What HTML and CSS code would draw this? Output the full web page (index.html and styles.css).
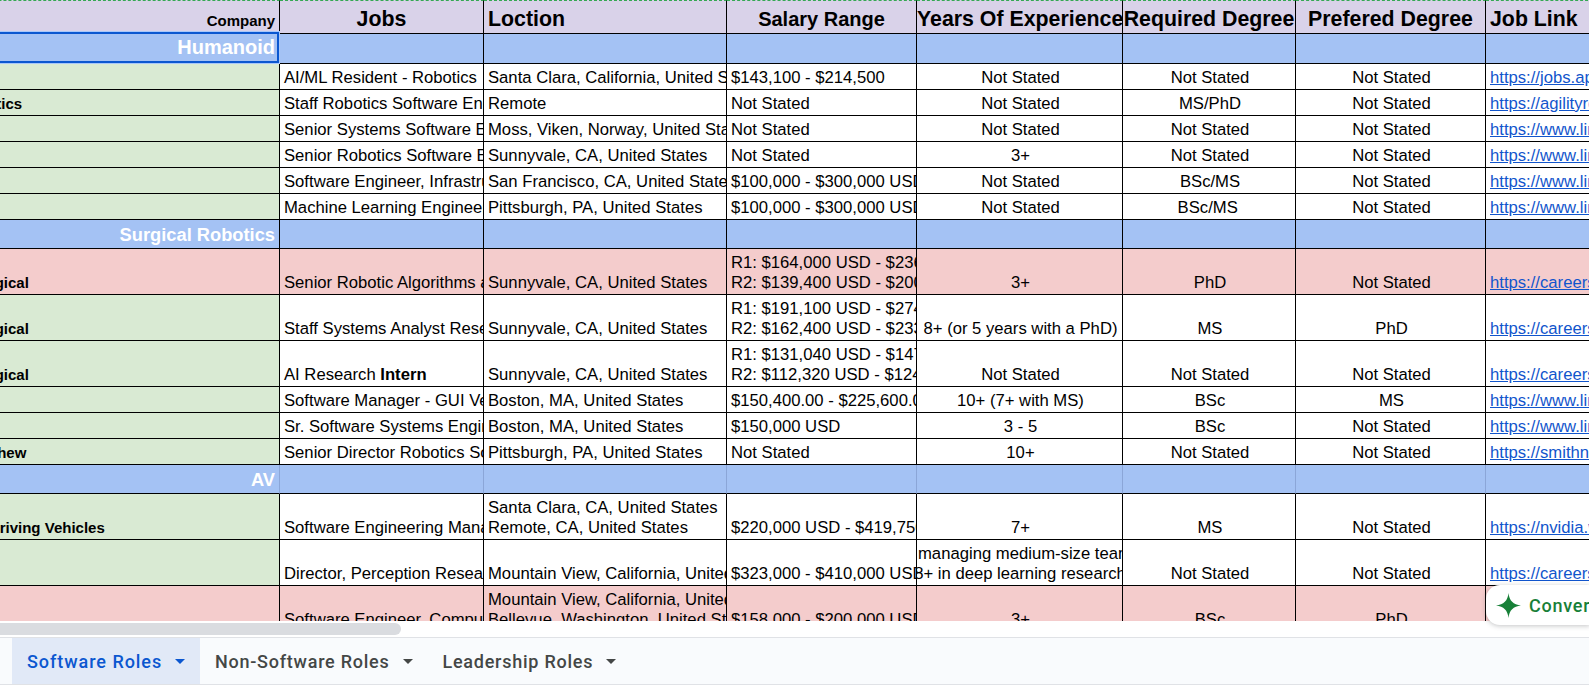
FILE: index.html
```html
<!DOCTYPE html>
<html lang="en">
<head>
<meta charset="utf-8">
<title>Job Tracker</title>
<link rel="stylesheet" href="styles.css">
</head>
<body>
<div class="app">
  <main class="viewport">
    <div class="grid-clip">
      <table class="sheet">
        <colgroup>
          <col class="c-company"><col class="c-jobs"><col class="c-loc"><col class="c-sal"><col class="c-exp"><col class="c-req"><col class="c-pref"><col class="c-link">
        </colgroup>
        <thead>
          <tr class="h-head">
            <th class="company-head">Company</th>
            <th class="big ctr">Jobs</th>
            <th class="big">Loction</th>
            <th class="mid ctr">Salary Range</th>
            <th class="big ctr tight">Years Of Experience</th>
            <th class="big ctr tight">Required Degree</th>
            <th class="big ctr">Prefered Degree</th>
            <th class="big">Job Link</th>
          </tr>
        </thead>
        <tbody>
          <tr class="section h-sec1"><td class="sec-name selected">Humanoid</td><td></td><td></td><td></td><td></td><td></td><td></td><td></td></tr>
          <tr class="ok h-1"><td class="co"></td><td>AI/ML Resident - Robotics</td><td>Santa Clara, California, United States</td><td>$143,100 - $214,500</td><td class="ctr">Not Stated</td><td class="ctr">Not Stated</td><td class="ctr">Not Stated</td><td><a href="#">https://jobs.apple.com/en-us/details</a></td></tr>
          <tr class="ok h-1"><td class="co">Agility Robotics</td><td>Staff Robotics Software Engineer</td><td>Remote</td><td>Not Stated</td><td class="ctr">Not Stated</td><td class="ctr">MS/PhD</td><td class="ctr">Not Stated</td><td><a href="#">https://agilityrobotics.com/careers</a></td></tr>
          <tr class="ok h-1"><td class="co"></td><td>Senior Systems Software Engineer</td><td>Moss, Viken, Norway, United States</td><td>Not Stated</td><td class="ctr">Not Stated</td><td class="ctr">Not Stated</td><td class="ctr">Not Stated</td><td><a href="#">https://www.linkedin.com/jobs/view</a></td></tr>
          <tr class="ok h-1"><td class="co"></td><td>Senior Robotics Software Engineer</td><td>Sunnyvale, CA, United States</td><td>Not Stated</td><td class="ctr">3+</td><td class="ctr">Not Stated</td><td class="ctr">Not Stated</td><td><a href="#">https://www.linkedin.com/jobs/view</a></td></tr>
          <tr class="ok h-1"><td class="co"></td><td>Software Engineer, Infrastructure</td><td>San Francisco, CA, United States</td><td>$100,000 - $300,000 USD</td><td class="ctr">Not Stated</td><td class="ctr">BSc/MS</td><td class="ctr">Not Stated</td><td><a href="#">https://www.linkedin.com/jobs/view</a></td></tr>
          <tr class="ok h-1"><td class="co"></td><td>Machine Learning Engineer</td><td>Pittsburgh, PA, United States</td><td>$100,000 - $300,000 USD</td><td class="ctr">Not Stated</td><td class="ctr">BSc/MS&nbsp;</td><td class="ctr">Not Stated</td><td><a href="#">https://www.linkedin.com/jobs/view</a></td></tr>
          <tr class="section h-sec2"><td class="sec-name">Surgical Robotics</td><td></td><td></td><td></td><td></td><td></td><td></td><td></td></tr>
          <tr class="bad h-2"><td class="co">Intuitive Surgical</td><td>Senior Robotic Algorithms and Controls</td><td>Sunnyvale, CA, United States</td><td>R1: $164,000 USD - $236,000 USD<br>R2: $139,400 USD - $200,600 USD</td><td class="ctr">3+</td><td class="ctr">PhD</td><td class="ctr">Not Stated</td><td><a href="#">https://careers.intuitive.com/en/jobs</a></td></tr>
          <tr class="ok h-2"><td class="co">Intuitive Surgical</td><td>Staff Systems Analyst Research</td><td>Sunnyvale, CA, United States</td><td>R1: $191,100 USD - $274,000 USD<br>R2: $162,400 USD - $233,000 USD</td><td class="ctr">8+ (or 5 years with a PhD)</td><td class="ctr">MS</td><td class="ctr">PhD</td><td><a href="#">https://careers.intuitive.com/en/jobs</a></td></tr>
          <tr class="ok h-2"><td class="co">Intuitive Surgical</td><td>AI Research <b>Intern</b></td><td>Sunnyvale, CA, United States</td><td>R1: $131,040 USD - $147,000 USD<br>R2: $112,320 USD - $124,000 USD</td><td class="ctr">Not Stated</td><td class="ctr">Not Stated</td><td class="ctr">Not Stated</td><td><a href="#">https://careers.intuitive.com/en/jobs</a></td></tr>
          <tr class="ok h-1"><td class="co"></td><td>Software Manager - GUI Verification</td><td>Boston, MA, United States</td><td>$150,400.00 - $225,600.00</td><td class="ctr">10+ (7+ with MS)</td><td class="ctr">BSc</td><td class="ctr">MS</td><td><a href="#">https://www.linkedin.com/jobs/view</a></td></tr>
          <tr class="ok h-1"><td class="co"></td><td>Sr. Software Systems Engineer</td><td>Boston, MA, United States</td><td>$150,000 USD</td><td class="ctr">3 - 5</td><td class="ctr">BSc</td><td class="ctr">Not Stated</td><td><a href="#">https://www.linkedin.com/jobs/view</a></td></tr>
          <tr class="ok h-1"><td class="co">Smith &amp; Nephew</td><td>Senior Director Robotics Software</td><td>Pittsburgh, PA, United States</td><td>Not Stated</td><td class="ctr">10+</td><td class="ctr">Not Stated</td><td class="ctr">Not Stated</td><td><a href="#">https://smithnephew.wd5.myworkdayjobs</a></td></tr>
          <tr class="section faint h-sec2"><td class="sec-name">AV</td><td></td><td></td><td></td><td></td><td></td><td></td><td></td></tr>
          <tr class="ok h-2"><td class="co">Nvidia Self Driving Vehicles</td><td>Software Engineering Manager</td><td>Santa Clara, CA, United States<br>Remote, CA, United States</td><td>$220,000 USD - $419,750 USD</td><td class="ctr">7+</td><td class="ctr">MS</td><td class="ctr">Not Stated</td><td><a href="#">https://nvidia.wd5.myworkdayjobs.com</a></td></tr>
          <tr class="ok h-2"><td class="co"></td><td>Director, Perception Research</td><td>Mountain View, California, United States</td><td>$323,000 - $410,000 USD</td><td class="exp-wrap"><div class="line-start">managing medium-size teams</div><div class="line-mid"><span>8+ in deep learning research</span></div></td><td class="ctr">Not Stated</td><td class="ctr">Not Stated</td><td><a href="#">https://careers.example.com/jobs</a></td></tr>
          <tr class="bad h-2"><td class="co"></td><td>Software Engineer, Computer Vision</td><td>Mountain View, California, United States<br>Bellevue, Washington, United States</td><td>$158,000 - $200,000 USD</td><td class="ctr">3+</td><td class="ctr">BSc</td><td class="ctr">PhD</td><td></td></tr>
        </tbody>
      </table>
    </div>
    <div class="hscroll"><div class="hthumb"></div></div>
    <button class="convert" type="button">
      <svg class="spark" viewBox="0 0 26 26" aria-hidden="true"><path d="M13 0 C13.8 8 18 12.2 26 13 C18 13.8 13.8 18 13 26 C12.2 18 8 13.8 0 13 C8 12.2 12.2 8 13 0 Z"/></svg>
      <span>Convert to table</span>
    </button>
  </main>
  <nav class="tabs">
    <div class="tab active"><span>Software Roles</span><i class="caret"></i></div>
    <div class="tab"><span>Non-Software Roles</span><i class="caret"></i></div>
    <div class="tab"><span>Leadership Roles</span><i class="caret"></i></div>
  </nav>
</div>
</body>
</html>
```

FILE: styles.css
```css
* { box-sizing: border-box; }
html, body { margin: 0; height: 100%; overflow: hidden; background: #fff; }
body { font-family: "Liberation Sans", Arial, sans-serif; color: #000; }

.app { display: flex; flex-direction: column; height: 685px; }
.viewport { position: relative; flex: 1; display: flex; flex-direction: column; min-height: 0; }

.grid-clip { height: 621px; overflow: hidden; flex: none; }

.sheet {
  table-layout: fixed;
  border-collapse: separate;
  border-spacing: 0;
  width: 1593px;
  margin-left: -96px;
  font-size: 16.67px;
  line-height: 20px;
}
.c-company { width: 376px; }
.c-jobs { width: 204px; }
.c-loc { width: 243px; }
.c-sal { width: 190px; }
.c-exp { width: 206px; }
.c-req { width: 173px; }
.c-pref { width: 190px; }
.c-link { width: 211px; }

.sheet th, .sheet td {
  border-right: 1px solid #000;
  border-bottom: 1px solid #000;
  padding: 0 4px 1px 4px;
  white-space: nowrap;
  overflow: hidden;
  vertical-align: bottom;
  text-align: left;
  font-weight: 400;
}
.sheet th {
  background: #d9d2e9;
  border-top: 1px dashed #34a853;
  font-weight: 700;
  padding-bottom: 1px;
}
.sheet b { font-weight: 700; }
.sheet .ctr { text-align: center; }
.sheet td.ctr { padding-left: 5px; padding-right: 3px; }
.sheet .tight { padding-left: 0; padding-right: 0; }
.sheet .big { font-size: 21.33px; line-height: 26px; }
.sheet .mid { font-size: 20px; line-height: 26px; }
.sheet .company-head { font-size: 15px; text-align: right; padding: 0 4px 2px 0; line-height: 20px; }

.h-head { height: 34px; }
.h-sec1 { height: 30px; }
.h-sec2 { height: 29px; }
.h-1 { height: 26px; }
.h-2 { height: 46px; }

.ok td { background: #fff; }
.ok td.co { background: #d9ead3; }
.bad td { background: #f4cccc; }
.sheet .co { font-weight: 700; font-size: 15px; }

.section td { background: #a4c2f4; }
.sheet .sec-name {
  position: relative;
  color: #fff;
  font-weight: 700;
  font-size: 18.3px;
  text-align: right;
  padding: 0 4px 1px 0;
  line-height: 24px;
}
.sheet .selected { overflow: visible; font-size: 20px; padding-bottom: 4px; }
.selected::after {
  content: "";
  position: absolute;
  top: -2px;
  right: 0;
  bottom: 0;
  left: 0;
  border: 2.5px solid #0b57d0;
  box-shadow: 0 0 0 1px #a8c7fa;
}
.sheet .faint td { border-right-color: #8ba6d8; }

.sheet a { color: #1155cc; text-decoration: underline; }

.sheet .exp-wrap { padding-left: 1px; padding-right: 0; }
.line-mid { display: flex; justify-content: center; }
.line-mid span { flex: none; }

.hscroll { height: 16px; flex: none; padding-top: 2px; background: #fff; }
.hthumb { width: 401px; height: 12px; background: #dadce0; border-radius: 0 6px 6px 0; }

.convert {
  position: absolute;
  top: 585px;
  right: -1px;
  width: 104px;
  height: 40px;
  display: flex;
  align-items: center;
  gap: 8px;
  padding: 0 0 0 10px;
  border: 0;
  border-radius: 14px 0 0 14px;
  background: #fff;
  box-shadow: 0 1px 5px rgba(60, 64, 67, .3);
  color: #188038;
  font: 500 18px Roboto, sans-serif;
  letter-spacing: .75px;
  white-space: nowrap;
  overflow: hidden;
}
.spark { width: 25px; height: 25px; flex: none; fill: #188038; }

.tabs {
  flex: none;
  height: 48px;
  display: flex;
  background: #f9fbfd;
  border-top: 1px solid #e0e2e6;
  border-bottom: 1px solid #e0e2e6;
  padding-left: 12px;
  font: 500 18px Roboto, sans-serif;
  letter-spacing: .75px;
  color: #444746;
  white-space: nowrap;
}
.tab { display: flex; align-items: center; gap: 13px; padding: 0 15px; }
.tab.active { width: 188px; background: #e1e9f7; color: #0b57d0; letter-spacing: .95px; padding-right: 0; }
.caret {
  flex: none;
  width: 0;
  height: 0;
  border-left: 5px solid transparent;
  border-right: 5px solid transparent;
  border-top: 5px solid currentColor;
}
```
